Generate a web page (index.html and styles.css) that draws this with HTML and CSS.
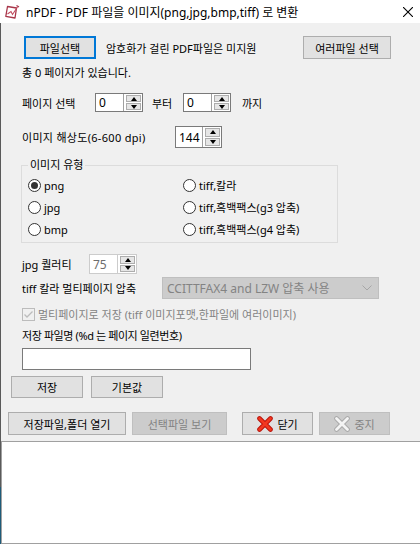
FILE: index.html
```html
<!DOCTYPE html>
<html lang="ko">
<head>
<meta charset="utf-8">
<title>nPDF</title>
<link rel="stylesheet" href="styles.css">
</head>
<body>
<div class="titlebar">
  <svg class="app-icon" viewBox="0 0 16 16" width="16" height="16">
    <path d="M3.5 2.5 L12.5 4 L11 14 L1.8 12.4 Z" fill="#fff" stroke="#a8364a" stroke-width="1.3" stroke-linejoin="round"/>
    <path d="M3.5 10 L7 7.5 L8.5 10.5 L13.5 3" fill="none" stroke="#c04a5e" stroke-width="1.1"/>
    <path d="M12.5 1.5 L15 3" stroke="#a8364a" stroke-width="1.2"/>
  </svg>
  <span class="title">nPDF - PDF 파일을 이미지(png,jpg,bmp,tiff) 로 변환</span>
  <svg class="close" viewBox="0 0 10 10" width="10" height="10">
    <path d="M0 0 L10 10 M10 0 L0 10" stroke="#000" stroke-width="1.1"/>
  </svg>
</div>

<div class="window">
  <div class="row row-top">
    <button class="btn btn-focus w72">파일선택</button>
    <span class="note">암호화가 걸린 PDF파일은 미지원</span>
    <button class="btn w88 push-right">여러파일 선택</button>
  </div>

  <div class="row row-pages pad">총 0 페이지가 있습니다.</div>

  <div class="row row-range pad">
    <span class="lbl lbl-page">페이지 선택</span>
    <div class="spin w48">
      <span class="spin-val">0</span>
      <span class="spin-btns"><span class="sb"><i class="tri-up"></i></span><span class="sb"><i class="tri-down"></i></span></span>
    </div>
    <span class="lbl lbl-from">부터</span>
    <div class="spin w48">
      <span class="spin-val">0</span>
      <span class="spin-btns"><span class="sb"><i class="tri-up"></i></span><span class="sb"><i class="tri-down"></i></span></span>
    </div>
    <span class="lbl lbl-to">까지</span>
  </div>

  <div class="row row-dpi pad">
    <span class="lbl lbl-dpi">이미지 해상도(6-600 dpi)</span>
    <div class="spin w47">
      <span class="spin-val">144</span>
      <span class="spin-btns"><span class="sb"><i class="tri-up"></i></span><span class="sb"><i class="tri-down"></i></span></span>
    </div>
  </div>

  <fieldset class="group">
    <legend>이미지 유형</legend>
    <div class="radio-grid">
      <label class="radio"><span class="circle checked"></span>png</label>
      <label class="radio"><span class="circle"></span>tiff,칼라</label>
      <label class="radio"><span class="circle"></span>jpg</label>
      <label class="radio"><span class="circle"></span>tiff,흑백팩스(g3 압축)</label>
      <label class="radio"><span class="circle"></span>bmp</label>
      <label class="radio"><span class="circle"></span>tiff,흑백팩스(g4 압축)</label>
    </div>
  </fieldset>

  <div class="row row-jpg pad">
    <span class="lbl lbl-jpg">jpg 퀄러티</span>
    <div class="spin spin-off w48">
      <span class="spin-val">75</span>
      <span class="spin-btns"><span class="sb"><i class="tri-up"></i></span><span class="sb"><i class="tri-down"></i></span></span>
    </div>
  </div>

  <div class="row row-tiff pad">
    <span class="lbl lbl-tiff">tiff 칼라 멀티페이지 압축</span>
    <div class="combo">
      <span>CCITTFAX4 and LZW 압축 사용</span>
      <svg class="chev" viewBox="0 0 10 6" width="10" height="6"><path d="M0.5 0.5 L5 5 L9.5 0.5" fill="none" stroke="#a6a6a6" stroke-width="1"/></svg>
    </div>
  </div>

  <div class="row row-check pad">
    <svg class="checkbox" viewBox="0 0 13 13" width="13" height="13">
      <rect x="0.5" y="0.5" width="12" height="12" fill="#f0f0f0" stroke="#bcbcbc"/>
      <path d="M2.5 6.5 L5 9 L10.5 3.5" fill="none" stroke="#bcbcbc" stroke-width="1.3"/>
    </svg>
    <span class="disabled-text">멀티페이지로 저장 (tiff 이미지포맷,한파일에 여러이미지)</span>
  </div>

  <div class="row row-name pad">저장 파일명 (%d 는 페이지 일련번호)</div>

  <div class="row row-input pad">
    <div class="textbox"></div>
  </div>

  <div class="row row-save">
    <button class="btn w72">저장</button>
    <button class="btn w72">기본값</button>
  </div>

  <div class="row row-actions">
    <button class="btn w118">저장파일,폴더 열기</button>
    <button class="btn btn-off w95">선택파일 보기</button>
    <button class="btn w71 gap-big">
      <svg class="xicon" viewBox="0 0 16 16" width="16" height="16">
        <path d="M2.5 2.5 L13.5 13.5 M13.5 2.5 L2.5 13.5" stroke="#b8120a" stroke-width="4.6" stroke-linecap="round"/>
        <path d="M2.5 2.5 L13.5 13.5 M13.5 2.5 L2.5 13.5" stroke="#f2371f" stroke-width="2.8" stroke-linecap="round"/>
      </svg>닫기</button>
    <button class="btn btn-off w71">
      <svg class="xicon" viewBox="0 0 16 16" width="16" height="16">
        <path d="M2.5 2.5 L13.5 13.5 M13.5 2.5 L2.5 13.5" stroke="#a9a9a9" stroke-width="4.6" stroke-linecap="round"/>
        <path d="M2.5 2.5 L13.5 13.5 M13.5 2.5 L2.5 13.5" stroke="#f4f4f4" stroke-width="2.8" stroke-linecap="round"/>
      </svg>중지</button>
  </div>

  <div class="log"></div>
</div>
</body>
</html>
```

FILE: styles.css
```css
* { box-sizing: border-box; }

html, body {
  margin: 0;
  padding: 0;
}

body {
  width: 420px;
  height: 544px;
  overflow: hidden;
  font-family: "Noto Sans", "Noto Sans CJK KR", sans-serif;
  font-size: 11px;
  color: #000;
  background: linear-gradient(to bottom, #ffffff 0, #ffffff 23px, #5a5a5a 23px, #5a5a5a 487px, #1e5b79 487px);
}

.titlebar {
  height: 23px;
  background: #fff;
  display: flex;
  align-items: center;
}

.app-icon {
  margin-left: 4px;
  flex: none;
}

.title {
  margin-left: 6px;
  font-size: 12px;
  white-space: nowrap;
}

.close {
  margin-left: auto;
  margin-right: 7px;
  flex: none;
}

.window {
  margin-left: 1px;
  height: 521px;
  background: #f0f0f0;
  display: flex;
  flex-direction: column;
}

.row {
  display: flex;
  align-items: center;
  flex: none;
  white-space: nowrap;
}

.pad { padding-left: 21px; }

.btn {
  font: inherit;
  color: #000;
  height: 100%;
  padding: 0;
  margin: 0;
  background: #e1e1e1;
  border: 1px solid #adadad;
  display: flex;
  align-items: center;
  justify-content: center;
  flex: none;
}

.btn-focus { border: 2px solid #0078d7; }

.btn-off {
  background: #cccccc;
  border-color: #bfbfbf;
  color: #838383;
}

.w72 { width: 72px; }
.w88 { width: 88px; }
.w118 { width: 118px; }
.w95 { width: 95px; }
.w71 { width: 71px; }
.w48 { width: 48px; }
.w47 { width: 47px; }

.push-right { margin-left: auto; margin-right: 29px; }

.row-top { margin-top: 13px; height: 23px; padding-left: 23px; }
.note { margin-left: 10px; }

.row-pages { margin-top: 5px; height: 16px; }

.row-range { margin-top: 13px; height: 19px; }
.lbl { flex: none; }
.lbl-page { width: 73px; }
.lbl-from { margin-left: 9px; width: 31px; }
.lbl-to { margin-left: 11px; }

.row-dpi { margin-top: 14px; height: 22px; }
.lbl-dpi { width: 153px; letter-spacing: 0.3px; }

/* spin box */
.spin {
  height: 100%;
  background: #fff;
  border: 1px solid #7a7a7a;
  display: flex;
  flex: none;
}

.spin-val {
  flex: 1;
  padding-left: 3px;
  display: flex;
  align-items: center;
  font-size: 12px;
}

.spin-btns {
  width: 19px;
  border-left: 1px solid #a0a0a0;
  margin-left: 0;
  padding: 1px 1px 1px 2px;
  display: flex;
  flex-direction: column;
  gap: 1px;
}

.sb {
  flex: 1;
  background: #e6e6e6;
  border: 1px solid #adadad;
  display: flex;
  align-items: center;
  justify-content: center;
}

.tri-up, .tri-down {
  width: 0;
  height: 0;
  border-left: 3.5px solid transparent;
  border-right: 3.5px solid transparent;
}
.tri-up { border-bottom: 4px solid #000; }
.tri-down { border-top: 4px solid #000; }

.spin-off { border-color: #cccccc; }
.spin-off .spin-val { color: #6d6d6d; }
.spin-off .spin-btns { border-left-color: #cccccc; }

/* group box */
.group {
  margin: 9px 0 0 20px;
  width: 317px;
  padding: 1px 0 2px 6px;
  border: 1px solid #dcdcdc;
  flex: none;
}

.group legend {
  padding: 0 2px;
  line-height: 16px;
  height: 16px;
}

.radio-grid {
  display: grid;
  grid-template-columns: 155px auto;
  grid-auto-rows: 22px;
}

.radio {
  display: flex;
  align-items: center;
  white-space: nowrap;
}

.circle {
  width: 13px;
  height: 13px;
  border: 1px solid #333;
  border-radius: 50%;
  background: #fff;
  margin-right: 3px;
  flex: none;
  display: flex;
  align-items: center;
  justify-content: center;
}

.circle.checked::after {
  content: "";
  width: 7px;
  height: 7px;
  border-radius: 50%;
  background: #333;
}

.row-jpg { margin-top: 11px; height: 20px; }
.lbl-jpg { width: 67px; }

.row-tiff { margin-top: 3px; height: 22px; }
.lbl-tiff { width: 140px; }

.combo {
  width: 217px;
  height: 100%;
  background: #cccccc;
  border: 1px solid #bfbfbf;
  color: #838383;
  padding: 0 6px 0 4px;
  display: flex;
  align-items: center;
  justify-content: space-between;
  font-size: 12px;
}

.row-check { margin-top: 7px; height: 16px; }
.checkbox { flex: none; margin-left: 0; }
.disabled-text { margin-left: 3px; color: #838383; }

.row-name { margin-top: 5px; height: 16px; letter-spacing: -0.4px; }

.row-input { margin-top: 5px; height: 22px; }
.textbox {
  width: 229px;
  height: 100%;
  background: #fff;
  border: 1px solid #7a7a7a;
}

.row-save {
  margin-top: 6px;
  height: 22px;
  padding-left: 10px;
  gap: 8px;
}

.row-actions {
  margin-top: 14px;
  height: 23px;
  padding-left: 7px;
  gap: 6px;
}

.gap-big { margin-left: 9px; }

.xicon { margin-right: 4px; flex: none; }

.log {
  margin-top: 6px;
  flex: 1;
  background: #fff;
  border-top: 1px solid #a0a0a0;
  border-left: 1px solid #a0a0a0;
  border-bottom: 1px solid #a0a0a0;
}
```
